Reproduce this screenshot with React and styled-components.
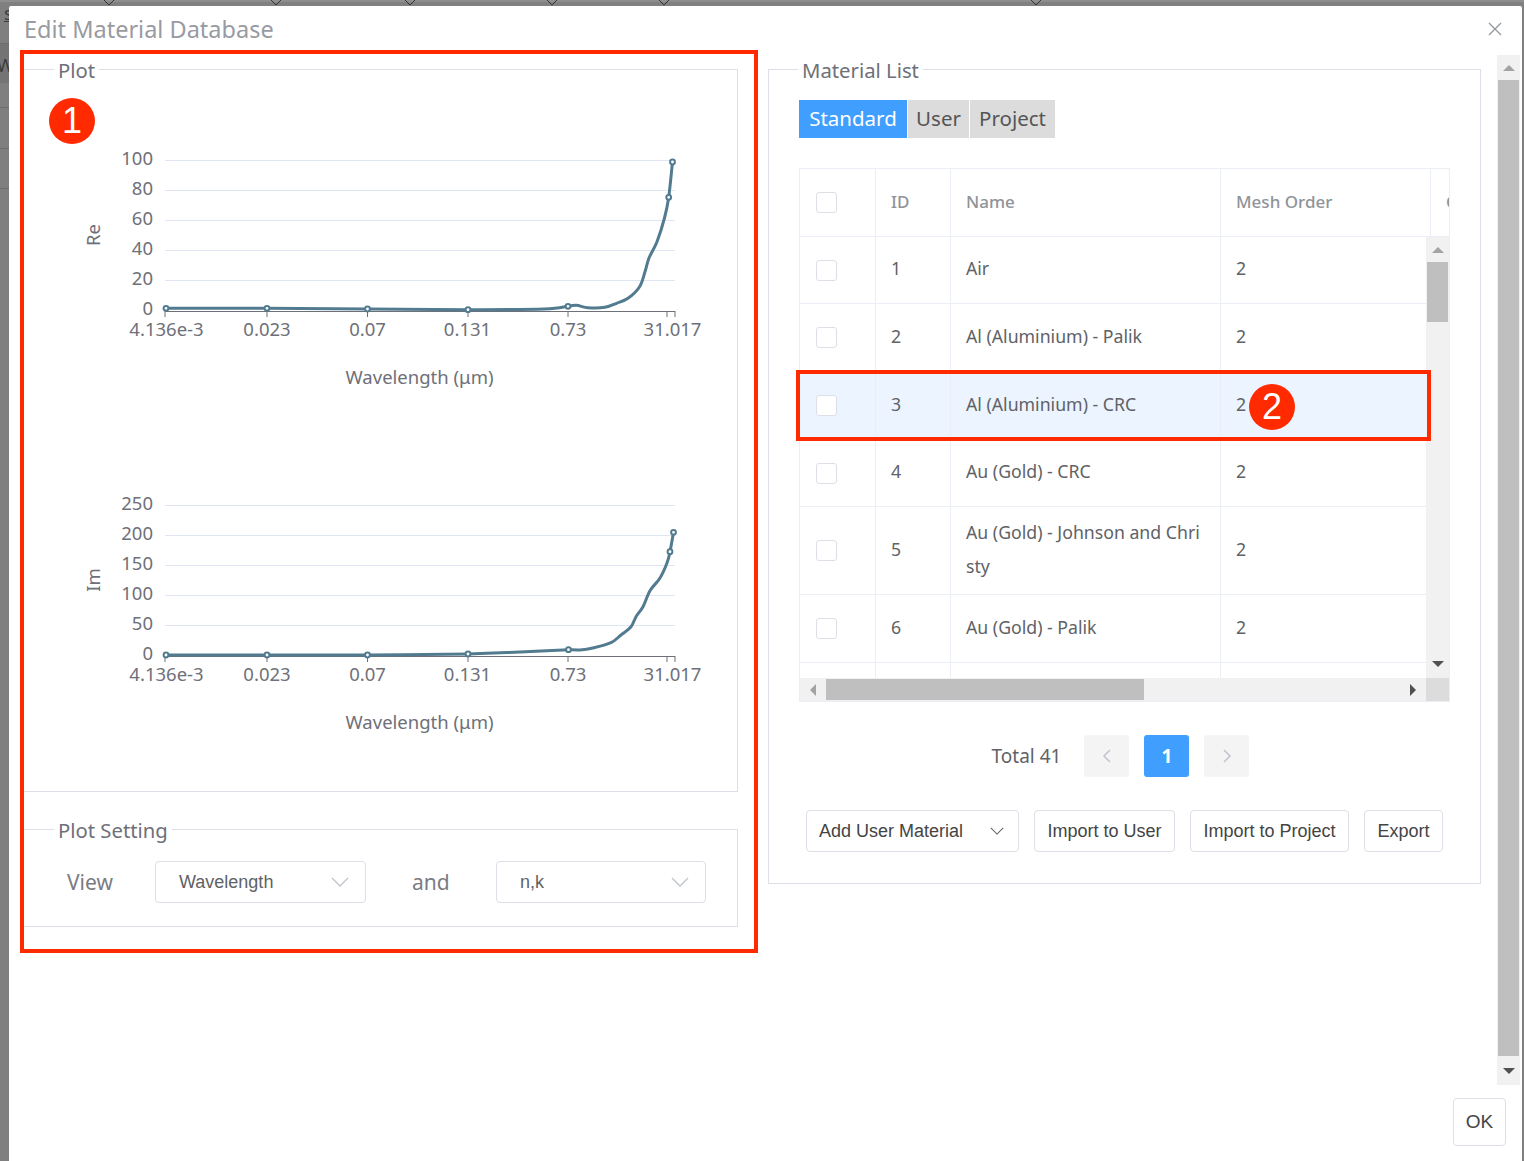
import React from 'react';
import styled, { createGlobalStyle } from 'styled-components';

const GlobalStyle = createGlobalStyle`
  html, body { margin: 0; padding: 0; background: #808080; }
  body { font-family: "Noto Sans", "Open Sans", sans-serif; overflow: hidden; }
  * { box-sizing: border-box; }
`;

const Page = styled.div`
  width: 1524px;
  height: 1161px;
  position: relative;
  overflow: hidden;
  background:
    linear-gradient(#6c6c6c, #6c6c6c) 0 43px / 9px 1px no-repeat,
    linear-gradient(#6c6c6c, #6c6c6c) 0 107px / 9px 1px no-repeat,
    linear-gradient(#6c6c6c, #6c6c6c) 0 148px / 9px 1px no-repeat,
    linear-gradient(#6c6c6c, #6c6c6c) 0 188px / 9px 1px no-repeat,
    linear-gradient(#747474, #747474) 0 44px / 9px 39px no-repeat,
    #7f7f7f;
`;

const TopStrip = styled.div`
  display: flex;
  height: 6px;
  background: #808080;
  border-top: 2px solid #8e8e8e;
`;

const StripMark = styled.svg`
  width: 12px;
  height: 6px;
  margin-left: ${p => p.$gap}px;
  margin-top: -2px;
  flex: none;
`;

/* scraps of the page behind the dialog */
const BehindText = styled.span`
  position: absolute;
  left: ${p => p.$x}px;
  top: ${p => p.$y}px;
  font-size: 18px;
  line-height: 20px;
  color: #3c3c3c;
  text-decoration: ${p => (p.$underline ? 'underline' : 'none')};
`;

const Modal = styled.div`
  position: relative;
  margin-left: 9px;
  width: 1513px;
  height: 1155px;
  background: #fff;
  border-radius: 2px 2px 0 0;
  display: flex;
  flex-direction: column;
`;

const Header = styled.div`
  height: 49px;
  flex: none;
  padding: 0 20px 3px 15px;
  display: flex;
  align-items: center;
  justify-content: space-between;
`;

const Title = styled.div`
  font-size: 23.5px;
  color: #989ba1;
`;

const CloseIcon = styled.svg`
  width: 14px;
  height: 14px;
`;

const Main = styled.div`
  flex: none;
  height: 1030px;
  display: flex;
  padding-left: 14px;
`;

const LeftColumn = styled.div`
  width: 715px;
  flex: none;
  display: flex;
  flex-direction: column;
  gap: 23px;
`;

const RightColumn = styled.div`
  width: 713px;
  margin-left: 30px;
  flex: none;
`;

const Fieldset = styled.fieldset`
  margin: 0;
  padding: 0;
  min-width: 0;
  height: ${p => p.$height}px;
  border: 1px solid #dcdfe6;
  display: block;
`;

const Legend = styled.legend`
  padding: 2px 4px 0;
  margin-left: ${p => p.$left}px;
  font-size: 20.3px;
  line-height: 26px;
  color: #6e7079;
`;

const ChartStack = styled.div`
  padding-top: 17px;
  display: flex;
  flex-direction: column;
`;

const ChartSvg = styled.svg`
  width: 713px;
  height: 345px;
  display: block;
  text { font-family: "Noto Sans", sans-serif; font-size: 18.5px; fill: #6e7079; }
`;

const SettingRow = styled.div`
  display: flex;
  align-items: center;
  padding: 18px 0 0 43px;
`;

const SettingLabel = styled.span`
  font-size: 21px;
  color: #7a7c82;
  width: ${p => p.$width}px;
  padding-left: ${p => p.$indent || 0}px;
  flex: none;
`;

const SelectBox = styled.div`
  width: ${p => p.$width}px;
  height: 42px;
  flex: none;
  border: 1px solid #dcdfe6;
  border-radius: 4px;
  display: flex;
  align-items: center;
  justify-content: space-between;
  padding: 0 16px 0 23px;
  font-size: 18px;
  color: #606266;
  font-family: "Liberation Sans", sans-serif;
`;

const Chevron = styled.svg`
  width: ${p => p.$size || 18}px;
  height: 10px;
  fill: none;
  stroke: ${p => p.$color || '#c0c4cc'};
  stroke-width: 1.3;
`;

const RightInner = styled.div`
  padding: 17px 30px 0 30px;
`;

const Tabs = styled.div`
  display: flex;
  gap: 1px;
`;

const Tab = styled.div`
  height: 38px;
  width: ${p => p.$width}px;
  padding-bottom: 2px;
  display: flex;
  align-items: center;
  justify-content: center;
  font-size: 20.5px;
  background: ${p => (p.$active ? '#409eff' : '#dcdcdc')};
  color: ${p => (p.$active ? '#fff' : '#555')};
`;

const Table = styled.div`
  margin-top: 30px;
  width: 651px;
  height: 534px;
  border: 1px solid #ebeef5;
  display: flex;
  flex-direction: column;
  overflow: hidden;
  background: #fff;
`;

const HeadRow = styled.div`
  height: 68px;
  flex: none;
  display: grid;
  grid-template-columns: 76px 75px 270px 210px 1fr;
  border-bottom: 1px solid #ebeef5;
`;

const HeadCell = styled.div`
  display: flex;
  align-items: center;
  padding: 0 0 ${p => (p.$check ? 0 : 3)}px ${p => (p.$check ? 16 : 15)}px;
  font-size: 17px;
  font-weight: 500;
  color: #909399;
  border-right: ${p => (p.$last ? 'none' : '1px solid #ebeef5')};
  white-space: nowrap;
  overflow: hidden;
`;

const BodyArea = styled.div`
  flex: 1;
  min-height: 0;
  display: flex;
`;

const Rows = styled.div`
  flex: 1;
  min-width: 0;
  overflow: hidden;
`;

const Row = styled.div`
  display: grid;
  grid-template-columns: 76px 75px 270px 1fr;
  height: ${p => p.$height}px;
  background: ${p => (p.$selected ? '#ecf5ff' : '#fff')};
  border-bottom: 1px solid #ebeef5;
`;

const Cell = styled.div`
  display: flex;
  align-items: center;
  padding: 0 15px ${p => (p.$check ? 0 : 4)}px ${p => (p.$check ? 16 : 15)}px;
  font-size: 17.7px;
  line-height: 34px;
  color: #606266;
  border-right: ${p => (p.$last ? 'none' : '1px solid #ebeef5')};
  word-break: break-all;
`;

const Checkbox = styled.span`
  width: 21px;
  height: 21px;
  flex: none;
  border: 1px solid #dcdfe6;
  border-radius: 3px;
  background: #fff;
`;

const VScroll = styled.div`
  width: 23px;
  flex: none;
  background: #f1f1f1;
  display: flex;
  flex-direction: column;
  align-items: center;
`;

const ScrollBtn = styled.div`
  height: ${p => p.$size}px;
  flex: none;
  display: flex;
  align-items: center;
  justify-content: center;
`;

const VThumb = styled.div`
  width: 21px;
  height: ${p => p.$length}px;
  flex: none;
  background: #bfbfbf;
`;

const ScrollSpacer = styled.div`
  flex: 1;
`;

const HScroll = styled.div`
  height: 23px;
  flex: none;
  background: #f1f1f1;
  display: flex;
  align-items: center;
`;

const HThumb = styled.div`
  height: 21px;
  width: 318px;
  flex: none;
  background: #bfbfbf;
`;

const HArrow = styled.div`
  width: ${p => p.$width}px;
  height: 100%;
  flex: none;
  display: flex;
  align-items: center;
  justify-content: center;
`;

const Corner = styled.div`
  width: 23px;
  height: 100%;
  flex: none;
  background: #dcdcdc;
`;

const Pager = styled.div`
  margin-top: 33px;
  padding-right: 8px;
  display: flex;
  align-items: center;
  justify-content: center;
`;

const PagerTotal = styled.span`
  font-size: 19px;
  color: #606266;
  margin-right: 23px;
`;

const PagerBtn = styled.div`
  width: 45px;
  height: 42px;
  margin-right: ${p => (p.$last ? 0 : 15)}px;
  border-radius: 3px;
  display: flex;
  align-items: center;
  justify-content: center;
  background: ${p => (p.$active ? '#409eff' : '#f4f4f5')};
  color: #fff;
  font-size: 19px;
  font-weight: 700;
`;

const ButtonRow = styled.div`
  margin-top: 33px;
  padding-left: 7px;
  display: flex;
  gap: 15px;
`;

const Button = styled.div`
  height: 42px;
  width: ${p => p.$width}px;
  flex: none;
  border: 1px solid #dcdfe6;
  border-radius: 4px;
  background: #fff;
  display: flex;
  align-items: center;
  justify-content: ${p => (p.$split ? 'space-between' : 'center')};
  padding: ${p => (p.$split ? '0 14px 0 12px' : '0')};
  font-family: "Liberation Sans", sans-serif;
  font-size: 18px;
  color: #444;
`;

const OuterScroll = styled.div`
  width: 23px;
  margin-left: 16px;
  flex: none;
  background: #f1f1f1;
  display: flex;
  flex-direction: column;
  align-items: center;
`;

const OuterThumb = styled.div`
  width: 21px;
  flex: 1;
  background: #bfbfbf;
`;

const Footer = styled.div`
  display: flex;
  justify-content: flex-end;
  padding: 13px 16px 0 0;
`;

const OkButton = styled(Button)`
  font-size: 19px;
  height: 48px;
`;

/* red callouts drawn over the screenshot */
const Callout = styled.div`
  position: absolute;
  border: 4px solid #ff2a00;
  pointer-events: none;
  left: ${p => p.$x}px;
  top: ${p => p.$y}px;
  width: ${p => p.$w}px;
  height: ${p => p.$h}px;
`;

const Badge = styled.div`
  position: absolute;
  left: ${p => p.$x}px;
  top: ${p => p.$y}px;
  width: 46px;
  height: 46px;
  border-radius: 50%;
  background: #ff2a00;
  color: #fff;
  font-size: 36px;
  line-height: 46px;
  text-align: center;
  font-family: "Liberation Sans", sans-serif;
`;

const Triangle = ({ dir, color = '#a3a3a3', size = 14 }) => {
  const pts = {
    up: '0,7 7,0 14,7',
    down: '0,0 14,0 7,7',
    left: '7,0 7,14 0,7',
    right: '0,0 0,14 7,7',
  }[dir];
  const vertical = dir === 'up' || dir === 'down';
  return (
    <svg
      width={vertical ? size : size / 2}
      height={vertical ? size / 2 : size}
      viewBox={vertical ? '0 0 14 7' : '0 0 7 14'}
    >
      <polygon points={pts} fill={color} />
    </svg>
  );
};

const DownChevron = props => (
  <Chevron viewBox="0 0 18 10" {...props}>
    <path d="M1 1 L9 9 L17 1" />
  </Chevron>
);

// catmull-rom through the sampled points, like the smoothed echarts line
function smoothPath(points) {
  let d = `M${points[0][0]} ${points[0][1]}`;
  for (let i = 0; i < points.length - 1; i++) {
    const p0 = points[i - 1] || points[i];
    const p1 = points[i];
    const p2 = points[i + 1];
    const p3 = points[i + 2] || p2;
    const c1x = p1[0] + (p2[0] - p0[0]) / 6;
    const c1y = p1[1] + (p2[1] - p0[1]) / 6;
    const c2x = p2[0] - (p3[0] - p1[0]) / 6;
    const c2y = p2[1] - (p3[1] - p1[1]) / 6;
    d += ` C${c1x} ${c1y} ${c2x} ${c2y} ${p2[0]} ${p2[1]}`;
  }
  return d;
}

const X_LABELS = [
  ['4.136e-3', 142.5],
  ['0.023', 243],
  ['0.07', 343.5],
  ['0.131', 443.5],
  ['0.73', 544],
  ['31.017', 648.5],
];
const X_TICKS = [141, 243, 343.5, 444, 544, 643, 651];

// local coords: page x - 24, page y - top of chart
const RE_LINE = [
  [142, 208.3], [243, 208.3], [343.5, 209], [444, 209.7], [520, 209], [544, 206.3], [552.5, 205.3],
  [564, 207.7], [581, 207.3], [592.6, 203.3], [604, 198.3], [615.6, 186.7], [621, 171.7],
  [625, 158], [633, 141.7], [640.5, 118], [644.7, 97.3], [648.5, 62],
];
const RE_DOTS = [[142, 208.3], [243, 208.3], [343.5, 209], [444, 209.7], [544, 206.3], [644.7, 97.3], [648.5, 62]];

const IM_LINE = [
  [142, 210], [243, 210], [343.5, 210], [444, 209], [496, 207], [544.5, 204.7], [556, 205],
  [570, 202.7], [587, 197.7], [597, 190], [607, 181.7], [612, 171.7], [619, 161.7], [626, 145.7],
  [636, 133], [643, 118], [646, 106.7], [649.5, 87.3],
];
const IM_DOTS = [[142, 210], [243, 210], [343.5, 210], [444, 209], [544.5, 204.7], [646, 106.7], [649.5, 87.3]];

function Chart({ axis, ticks, line, dots }) {
  const gridY = [60, 90, 120, 150, 180];
  return (
    <ChartSvg viewBox="0 0 713 345">
      {gridY.map(y => (
        <line key={y} x1="141" x2="651" y1={y + 0.5} y2={y + 0.5} stroke="#dfe5f2" strokeWidth="1.2" />
      ))}
      <line x1="141" x2="651" y1="211.5" y2="211.5" stroke="#6e7079" strokeWidth="1" />
      {X_TICKS.map(x => (
        <line key={x} x1={x} x2={x} y1="211" y2="217" stroke="#6e7079" strokeWidth="1" />
      ))}
      {ticks.map((t, i) => (
        <text key={t} x="129" y={65 + i * 30} textAnchor="end">{t}</text>
      ))}
      {X_LABELS.map(([t, x]) => (
        <text key={t} x={x} y="236" textAnchor="middle">{t}</text>
      ))}
      <text x="395.5" y="284" textAnchor="middle">Wavelength (μm)</text>
      <text x="0" y="0" textAnchor="middle" transform="translate(76 135) rotate(-90)">{axis}</text>
      <path d={smoothPath(line)} fill="none" stroke="#527b90" strokeWidth="3" />
      {dots.map(([x, y]) => (
        <circle key={x} cx={x} cy={y} r="2.4" fill="#fff" stroke="#527b90" strokeWidth="2" />
      ))}
    </ChartSvg>
  );
}

const MATERIALS = [
  { id: 1, name: 'Air', h: 67 },
  { id: 2, name: 'Al (Aluminium) - Palik', h: 68 },
  { id: 3, name: 'Al (Aluminium) - CRC', h: 68, selected: true },
  { id: 4, name: 'Au (Gold) - CRC', h: 67 },
  { id: 5, name: 'Au (Gold) - Johnson and Christy', h: 88 },
  { id: 6, name: 'Au (Gold) - Palik', h: 68 },
];

export default function App() {
  return (
    <Page>
      <GlobalStyle />
      <BehindText $x={4} $y={3} $underline>s</BehindText>
      <BehindText $x={-3} $y={55}>W</BehindText>
      <TopStrip>
        {[103, 155, 122, 130, 100, 360].map((gap, i) => (
          <StripMark key={i} $gap={gap} viewBox="0 0 12 6">
            <path d="M1 0 L6 5 L11 0" fill="none" stroke="#333" strokeWidth="1" />
          </StripMark>
        ))}
      </TopStrip>
      <Modal>
        <Header>
          <Title>Edit Material Database</Title>
          <CloseIcon viewBox="0 0 14 14">
            <path d="M1 1 L13 13 M13 1 L1 13" stroke="#909399" strokeWidth="1.2" fill="none" />
          </CloseIcon>
        </Header>
        <Main>
          <LeftColumn>
            <Fieldset $height={737}>
              <Legend $left={30}>Plot</Legend>
              <ChartStack>
                <Chart axis="Re" ticks={['100', '80', '60', '40', '20', '0']} line={RE_LINE} dots={RE_DOTS} />
                <Chart axis="Im" ticks={['250', '200', '150', '100', '50', '0']} line={IM_LINE} dots={IM_DOTS} />
              </ChartStack>
            </Fieldset>
            <Fieldset $height={112}>
              <Legend $left={30}>Plot Setting</Legend>
              <SettingRow>
                <SettingLabel $width={88}>View</SettingLabel>
                <SelectBox $width={211}>Wavelength<DownChevron /></SelectBox>
                <SettingLabel $width={130} $indent={46}>and</SettingLabel>
                <SelectBox $width={210}>n,k<DownChevron /></SelectBox>
              </SettingRow>
            </Fieldset>
          </LeftColumn>
          <RightColumn>
            <Fieldset $height={829}>
              <Legend $left={29}>Material List</Legend>
              <RightInner>
                <Tabs>
                  <Tab $active $width={108}>Standard</Tab>
                  <Tab $width={61}>User</Tab>
                  <Tab $width={85}>Project</Tab>
                </Tabs>
                <Table>
                  <HeadRow>
                    <HeadCell $check><Checkbox /></HeadCell>
                    <HeadCell>ID</HeadCell>
                    <HeadCell>Name</HeadCell>
                    <HeadCell>Mesh Order</HeadCell>
                    <HeadCell $last>Color</HeadCell>
                  </HeadRow>
                  <BodyArea>
                    <Rows>
                      {MATERIALS.map(m => (
                        <Row key={m.id} $height={m.h} $selected={m.selected}>
                          <Cell $check><Checkbox /></Cell>
                          <Cell>{m.id}</Cell>
                          <Cell>{m.name}</Cell>
                          <Cell $last>2</Cell>
                        </Row>
                      ))}
                      <Row $height={68}>
                        <Cell />
                        <Cell />
                        <Cell />
                        <Cell $last />
                      </Row>
                    </Rows>
                    <VScroll>
                      <ScrollBtn $size={25}><Triangle dir="up" size={12} /></ScrollBtn>
                      <VThumb $length={60} />
                      <ScrollSpacer />
                      <ScrollBtn $size={29}><Triangle dir="down" color="#505050" size={12} /></ScrollBtn>
                    </VScroll>
                  </BodyArea>
                  <HScroll>
                    <HArrow $width={26}><Triangle dir="left" size={12} /></HArrow>
                    <HThumb />
                    <ScrollSpacer />
                    <HArrow $width={26}><Triangle dir="right" color="#505050" size={12} /></HArrow>
                    <Corner />
                  </HScroll>
                </Table>
                <Pager>
                  <PagerTotal>Total 41</PagerTotal>
                  <PagerBtn>
                    <svg width="10" height="16" viewBox="0 0 10 16"><path d="M8 2 L2 8 L8 14" fill="none" stroke="#c0c4cc" strokeWidth="1.5" /></svg>
                  </PagerBtn>
                  <PagerBtn $active>1</PagerBtn>
                  <PagerBtn $last>
                    <svg width="10" height="16" viewBox="0 0 10 16"><path d="M2 2 L8 8 L2 14" fill="none" stroke="#c0c4cc" strokeWidth="1.5" /></svg>
                  </PagerBtn>
                </Pager>
                <ButtonRow>
                  <Button $split $width={213}>Add User Material<DownChevron $size={14} $color="#606266" /></Button>
                  <Button $width={141}>Import to User</Button>
                  <Button $width={159}>Import to Project</Button>
                  <Button $width={79}>Export</Button>
                </ButtonRow>
              </RightInner>
            </Fieldset>
          </RightColumn>
          <OuterScroll>
            <ScrollBtn $size={25}><Triangle dir="up" size={12} /></ScrollBtn>
            <OuterThumb />
            <ScrollBtn $size={29}><Triangle dir="down" color="#505050" size={12} /></ScrollBtn>
          </OuterScroll>
        </Main>
        <Footer>
          <OkButton $width={53}>OK</OkButton>
        </Footer>
      </Modal>
      <Callout $x={20} $y={50} $w={738} $h={903} />
      <Callout $x={796} $y={370} $w={635} $h={71} />
      <Badge $x={49} $y={98}>1</Badge>
      <Badge $x={1249} $y={384}>2</Badge>
    </Page>
  );
}
